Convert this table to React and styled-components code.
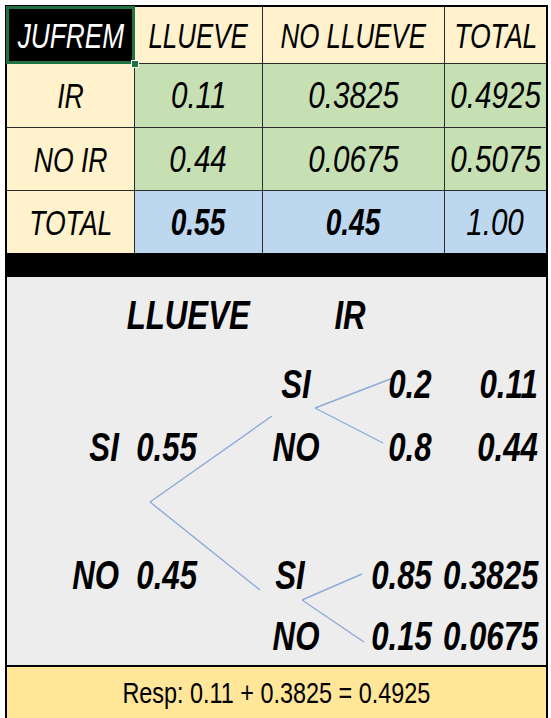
import React from 'react';
import styled, { createGlobalStyle } from 'styled-components';

const Global = createGlobalStyle`
  html, body {
    margin: 0;
    padding: 0;
    background: #fff;
  }
  body {
    font-family: "Liberation Sans", Arial, sans-serif;
  }
`;

const Page = styled.div`
  width: 551px;
  height: 718px;
  overflow: hidden;
  padding: 5px 0 0 5px;
  box-sizing: border-box;
`;

const Frame = styled.div`
  width: 543px;
  box-sizing: border-box;
  border: 2px solid #000;
  border-bottom: none;
`;

// The sheet uses a narrow font; Liberation Sans squeezed horizontally stands in for it.
const Squeeze = styled.span`
  display: inline-block;
  white-space: pre;
  transform: scaleX(${(p) => p.$sx || 0.78});
  transform-origin: ${(p) => p.$origin || 'center'};
`;

const Table = styled.div`
  display: grid;
  grid-template-columns: 127px 127px 181px minmax(0, 1fr);
  grid-template-rows: 56px 63px 62px 62px;
  gap: 1px;
  background: #2b2b2b;
`;

const tones = {
  head: '#fff2cc',
  data: '#c6e0b4',
  total: '#bdd7ee',
};

const Cell = styled.div`
  position: relative;
  min-width: 0;
  display: flex;
  align-items: center;
  justify-content: center;
  background: ${(p) => tones[p.$tone] || tones.head};
  font-style: italic;
  font-weight: ${(p) => (p.$bold ? 700 : 400)};
  font-size: ${(p) => (p.$tone ? 37 : 35)}px;
  line-height: 1;
  color: #000;
  white-space: nowrap;
`;

const Selected = styled(Cell)`
  background: #000;
  color: #fff;
  box-shadow: inset 0 0 0 2px #217346;
  outline: 1px solid #217346;
`;

const Handle = styled.span`
  position: absolute;
  right: -5px;
  bottom: -5px;
  width: 6px;
  height: 6px;
  background: #217346;
  border: 1px solid #fff;
  z-index: 2;
`;

const Bar = styled.div`
  height: 24px;
  background: #000;
`;

const Tree = styled.div`
  position: relative;
  height: 388px;
  background: #ededed;
  display: grid;
  grid-template-columns: 198px 65px 52px 118px minmax(0, 1fr);
  grid-template-rows: 76px 62px 64px 64px 64px 58px;
  font-style: italic;
  font-weight: 700;
  font-size: 40px;
  color: #000;
`;

const Lines = styled.svg`
  position: absolute;
  inset: 0;
  width: 100%;
  height: 100%;
  pointer-events: none;
`;

const Node = styled.div`
  grid-column: ${(p) => p.$col};
  grid-row: ${(p) => p.$row};
  min-width: 0;
  display: flex;
  align-items: center;
  justify-content: ${(p) => p.$align || 'flex-end'};
  padding-right: ${(p) => p.$pad ?? 8}px;
  line-height: 1;
`;

const Answer = styled.div`
  border-top: 2px solid #000;
  height: 51px;
  background: #ffe699;
  display: flex;
  align-items: center;
  justify-content: center;
  font-size: 30px;
  line-height: 1;
  color: #000;
`;

const branches = [
  [143, 225, 265, 139],
  [143, 225, 253, 313],
  [308, 131, 386, 101],
  [308, 131, 376, 166],
  [295, 323, 355, 297],
  [295, 323, 357, 365],
];

const rows = [
  { label: 'IR', tone: 'data', cells: ['0.11', '0.3825', '0.4925'] },
  { label: 'NO IR', tone: 'data', cells: ['0.44', '0.0675', '0.5075'] },
];

const T = ({ children, sx, origin }) => (
  <Squeeze $sx={sx} $origin={origin}>{children}</Squeeze>
);

const N = ({ col, row, align, pad, children }) => (
  <Node $col={col} $row={row} $align={align} $pad={pad}>
    <T origin={align === 'center' ? 'center' : 'right'}>{children}</T>
  </Node>
);

export default function App() {
  return (
    <Page>
      <Global />
      <Frame>
        <Table>
          <Selected>
            <T sx={0.75}>JUFREM</T>
            <Handle />
          </Selected>
          <Cell><T sx={0.74}>LLUEVE</T></Cell>
          <Cell><T sx={0.74}>NO LLUEVE</T></Cell>
          <Cell><T sx={0.76}>TOTAL</T></Cell>

          {rows.map((r) => (
            <React.Fragment key={r.label}>
              <Cell><T sx={0.76}>{r.label}</T></Cell>
              {r.cells.map((v) => (
                <Cell key={v} $tone={r.tone}><T sx={0.8}>{v}</T></Cell>
              ))}
            </React.Fragment>
          ))}

          <Cell><T sx={0.76}>TOTAL</T></Cell>
          <Cell $tone="total" $bold><T sx={0.76}>0.55</T></Cell>
          <Cell $tone="total" $bold><T sx={0.76}>0.45</T></Cell>
          <Cell $tone="total"><T sx={0.8}>1.00</T></Cell>
        </Table>
        <Bar />
        <Tree>
          <Lines viewBox="0 0 539 388">
            {branches.map(([x1, y1, x2, y2], i) => (
              <line key={i} x1={x1} y1={y1} x2={x2} y2={y2} stroke="#8eaadb" strokeWidth="1.4" />
            ))}
          </Lines>

          <N col="1 / 3" row={1} pad={20}>LLUEVE</N>
          <N col="3 / 5" row={1} align="center" pad={10}>IR</N>

          <N col={3} row={2} align="center" pad={0}>SI</N>
          <N col={4} row={2}>0.2</N>
          <N col={5} row={2}>0.11</N>

          <N col={1} row={3}>{'SI  0.55'}</N>
          <N col={3} row={3} align="center" pad={0}>NO</N>
          <N col={4} row={3}>0.8</N>
          <N col={5} row={3}>0.44</N>

          <N col={1} row={5}>{'NO  0.45'}</N>
          <N col={3} row={5} align="center" pad={12}>SI</N>
          <N col={4} row={5}>0.85</N>
          <N col={5} row={5}>0.3825</N>

          <N col={3} row={6} align="center" pad={0}>NO</N>
          <N col={4} row={6}>0.15</N>
          <N col={5} row={6}>0.0675</N>
        </Tree>
        <Answer><T>Resp: 0.11 + 0.3825 = 0.4925</T></Answer>
      </Frame>
    </Page>
  );
}
